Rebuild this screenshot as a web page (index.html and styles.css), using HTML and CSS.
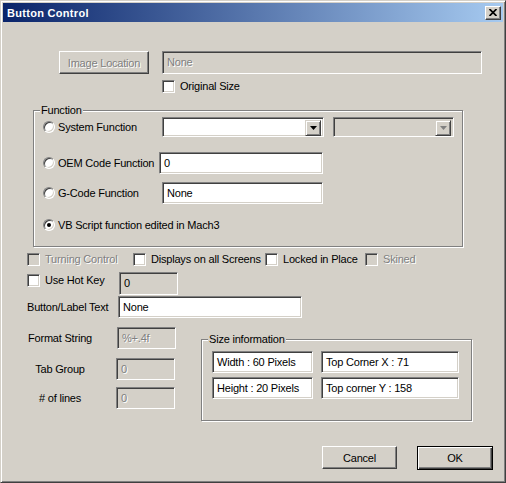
FILE: index.html
```html
<!DOCTYPE html>
<html>
<head>
<meta charset="utf-8">
<title>Button Control</title>
<link rel="stylesheet" href="styles.css">
</head>
<body>
<div class="window">
  <div class="titlebar">
    <span class="title">Button Control</span>
    <span class="close"><svg width="8" height="7" viewBox="0 0 8 7"><path d="M0.5 0 L7.5 7 M7.5 0 L0.5 7" stroke="#000" stroke-width="1.7"/></svg></span>
  </div>
  <div class="content">
    <div class="r-image">
      <div class="btn w-img dis">Image Location</div>
      <div class="edit gray dis e-path">None</div>
    </div>
    <div class="r-orig">
      <span class="check"></span><span class="clabel">Original Size</span>
    </div>

    <div class="group g-func">
      <span class="legend">Function</span>
      <div class="frow fr1">
        <span class="radio"></span><span class="flabel">System Function</span>
        <div class="combo c1"><div class="dd"><svg width="7" height="4" viewBox="0 0 7 4"><polygon points="0,0 7,0 3.5,4" fill="#000"/></svg></div></div>
        <div class="combo gray c2"><div class="dd"><svg width="7" height="4" viewBox="0 0 7 4"><polygon points="0,0 7,0 3.5,4" fill="#808080"/></svg></div></div>
      </div>
      <div class="frow fr2">
        <span class="radio"></span><span class="flabel">OEM Code Function</span>
        <div class="edit e-oem">0</div>
      </div>
      <div class="frow fr3">
        <span class="radio"></span><span class="flabel">G-Code Function</span>
        <div class="edit e-g">None</div>
      </div>
      <div class="frow fr4">
        <span class="radio on"></span><span>VB Script function edited in Mach3</span>
      </div>
    </div>

    <div class="r-checks">
      <div class="citem"><span class="check gray"></span><span class="clabel dis">Turning Control</span></div>
      <div class="citem"><span class="check"></span><span class="clabel">Displays on all Screens</span></div>
      <div class="citem"><span class="check"></span><span class="clabel">Locked in Place</span></div>
      <div class="citem"><span class="check gray"></span><span class="clabel dis">Skined</span></div>
    </div>

    <div class="r-hot">
      <div class="citem hotitem"><span class="check"></span><span class="clabel">Use Hot Key</span></div>
      <div class="edit gray e-hot">0</div>
    </div>

    <div class="r-text">
      <span class="tlabel">Button/Label Text</span>
      <div class="edit e-text">None</div>
    </div>

    <div class="lower">
      <div class="leftcol">
        <div class="lrow">
          <span class="llabel">Format String</span>
          <div class="edit gray dis e-small">%+.4f</div>
        </div>
        <div class="lrow lr2">
          <span class="llabel">Tab Group</span>
          <div class="edit gray dis e-small e-shift">0</div>
        </div>
        <div class="lrow lr3">
          <span class="llabel"># of lines</span>
          <div class="edit gray dis e-small e-shift">0</div>
        </div>
      </div>
      <div class="group g-size">
        <span class="legend">Size information</span>
        <div class="sizegrid">
          <div class="edit">Width : 60 Pixels</div>
          <div class="edit">Top Corner X : 71</div>
          <div class="edit">Height : 20 Pixels</div>
          <div class="edit">Top corner Y : 158</div>
        </div>
      </div>
    </div>

    <div class="r-buttons">
      <div class="btn w-cancel">Cancel</div>
      <div class="btn btn-default w-ok">OK</div>
    </div>
  </div>
</div>
</body>
</html>
```
FILE: styles.css
```css
* { box-sizing: border-box; }

body {
  margin: 0;
  background: #d4d0c8;
  font-family: "Liberation Sans", Arial, sans-serif;
  font-size: 11px;
  letter-spacing: -0.2px;
  color: #000;
}

.window {
  width: 506px;
  height: 483px;
  background: #d4d0c8;
  border: 1px solid;
  border-color: #d4d0c8 #404040 #404040 #d4d0c8;
  box-shadow: inset 1px 1px #fff, inset -1px -1px #808080;
  padding: 2px;
}

.titlebar {
  height: 19px;
  background: linear-gradient(to right, #0a246a, #a6caf0);
  display: flex;
  align-items: center;
  justify-content: space-between;
  padding: 0 2px 0 4px;
}

.title {
  color: #fff;
  font-weight: bold;
  font-size: 11px;
  letter-spacing: 0.3px;
}

.close {
  width: 16px;
  height: 14px;
  background: #d4d0c8;
  border: 1px solid;
  border-color: #fff #404040 #404040 #fff;
  box-shadow: inset -1px -1px #808080;
  display: flex;
  align-items: center;
  justify-content: center;
}

/* generic controls */
.dis {
  color: #808080;
  text-shadow: 1px 1px 0 #fff;
}

.btn {
  height: 23px;
  display: flex;
  align-items: center;
  justify-content: center;
  background: #d4d0c8;
  border: 1px solid;
  border-color: #fff #404040 #404040 #fff;
  box-shadow: inset -1px -1px #808080;
}

.btn-default {
  height: 24px;
  border: 1px solid #000;
  box-shadow: inset 1px 1px #fff, inset -1px -1px #404040, inset -2px -2px #808080;
}

.edit {
  height: 22px;
  display: flex;
  align-items: center;
  padding: 0 0 1px 4px;
  background: #fff;
  border: 1px solid;
  border-color: #808080 #fff #fff #808080;
  box-shadow: inset 1px 1px #404040, inset -1px -1px #d4d0c8;
  white-space: nowrap;
}

.gray { background: #d4d0c8; }

.check {
  flex: none;
  width: 13px;
  height: 13px;
  background: #fff;
  border: 1px solid;
  border-color: #808080 #fff #fff #808080;
  box-shadow: inset 1px 1px #404040, inset -1px -1px #d4d0c8;
}
.check.gray { background: #d4d0c8; }

.clabel {
  margin-left: 5px;
  line-height: 13px;
  white-space: nowrap;
}

.radio {
  flex: none;
  width: 12px;
  height: 12px;
  border-radius: 50%;
  background: #fff;
  border: 1px solid;
  border-color: #808080 #fff #fff #808080;
  box-shadow: inset 1px 1px #404040, inset -1px -1px #d4d0c8;
  margin-right: 3px;
  display: flex;
  align-items: center;
  justify-content: center;
}
.radio.on::after {
  content: "";
  width: 4px;
  height: 4px;
  border-radius: 50%;
  background: #000;
}

.group {
  position: relative;
  border: 1px solid #808080;
  box-shadow: 1px 1px 0 #fff, inset 1px 1px 0 #fff;
}

.legend {
  position: absolute;
  top: -7px;
  left: 6px;
  padding: 0 1px;
  line-height: 13px;
  background: #d4d0c8;
  white-space: nowrap;
}

/* row 1 */
.r-image {
  display: flex;
  margin-top: 29px;
  margin-left: 56px;
}
.w-img { width: 90px; }
.e-path {
  margin-left: 13px;
  width: 320px;
  height: 23px;
}

.r-orig {
  display: flex;
  align-items: center;
  height: 13px;
  margin-top: 6px;
  margin-left: 159px;
}

/* function group */
.g-func {
  margin-top: 17px;
  margin-left: 30px;
  width: 430px;
  height: 137px;
  padding-top: 6px;
}

.frow {
  display: flex;
  align-items: center;
  margin-left: 9px;
  white-space: nowrap;
}
.fr1 { height: 20px; }
.fr2 { height: 22px; margin-top: 15px; }
.fr3 { height: 22px; margin-top: 8px; }
.fr4 { height: 14px; margin-top: 14px; }

.flabel { width: 104px; }

.combo {
  height: 20px;
  display: flex;
  justify-content: flex-end;
  padding: 2px;
  background: #fff;
  border: 1px solid;
  border-color: #808080 #fff #fff #808080;
  box-shadow: inset 1px 1px #404040, inset -1px -1px #d4d0c8;
}
.combo.gray { background: #d4d0c8; }
.c1 { width: 162px; }
.c2 { width: 121px; margin-left: 9px; }

.dd {
  width: 16px;
  height: 16px;
  background: #d4d0c8;
  border: 1px solid;
  border-color: #d4d0c8 #404040 #404040 #d4d0c8;
  box-shadow: inset 1px 1px #fff, inset -1px -1px #808080;
  display: flex;
  align-items: center;
  justify-content: center;
}

.e-oem { width: 164px; margin-left: -3px; }
.e-g { width: 161px; }

/* checks row */
.r-checks {
  display: grid;
  grid-template-columns: 106px 132px 100px auto;
  margin-top: 6px;
  margin-left: 24px;
  height: 13px;
}
.citem {
  display: flex;
  align-items: center;
}

.r-hot {
  display: flex;
  margin-top: 6px;
  margin-left: 24px;
}
.hotitem {
  width: 92px;
  align-self: flex-start;
  margin-top: 2px;
}
.e-hot { width: 59px; height: 23px; }

.r-text {
  display: flex;
  align-items: center;
  margin-top: 1px;
  margin-left: 24px;
}
.tlabel { width: 91px; white-space: nowrap; }
.e-text { width: 184px; }

/* lower section */
.lower {
  display: flex;
  margin-top: 9px;
}
.leftcol { margin-left: 22px; }
.lrow {
  display: flex;
  align-items: center;
  height: 22px;
}
.lr2 { margin-top: 9px; }
.lr3 { margin-top: 7px; }
.llabel {
  width: 70px;
  text-align: center;
  white-space: nowrap;
}
.e-small { width: 59px; margin-left: 22px; }
.e-small.e-shift { margin-left: 21px; }

.g-size {
  margin-left: 25px;
  margin-top: 12px;
  width: 271px;
  height: 82px;
  padding: 11px 0 0 10px;
}
.sizegrid {
  display: grid;
  grid-template-columns: 101px 138px;
  column-gap: 8px;
  row-gap: 4px;
}

.r-buttons {
  display: flex;
  justify-content: flex-end;
  gap: 20px;
  margin-top: 25px;
  padding-right: 10px;
}
.w-cancel { width: 75px; }
.w-ok { width: 76px; }
```
